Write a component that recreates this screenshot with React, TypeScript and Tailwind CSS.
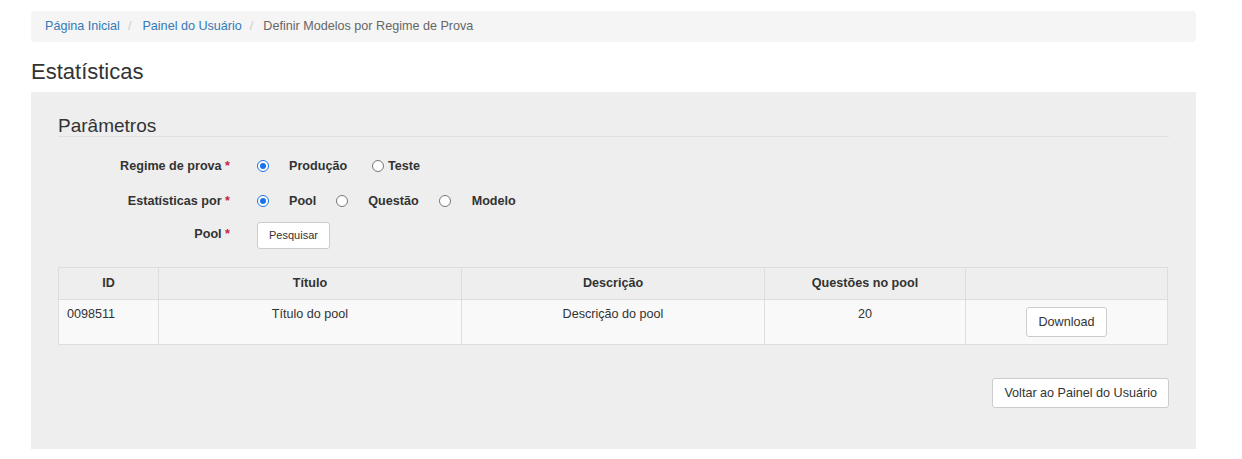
import React from "react";

const Radio = ({ checked }: { checked?: boolean }) =>
  checked ? (
    <span className="inline-block w-[12px] h-[12px] rounded-full border border-[#1a73e8] bg-white relative">
      <span className="absolute left-[2px] top-[2px] w-[6px] h-[6px] rounded-full bg-[#1a73e8]" />
    </span>
  ) : (
    <span className="inline-block w-[12px] h-[12px] rounded-full border border-[#767676] bg-white" />
  );

export default function App() {
  return (
    <div className="w-[1242px] h-[459px] bg-white overflow-hidden font-['Liberation_Sans',Arial,sans-serif] text-[#333] text-[12.6px]">
      <div className="ml-[31px] w-[1165px] pt-[11px]">
        <div className="h-[31px] bg-[#f5f5f5] rounded-[4px] flex items-center px-[14px] text-[12.6px]">
          <span className="text-[#337ab7]">Página Inicial</span>
          <span className="text-[#ccc] px-[8px]">/</span>
          <span className="text-[#337ab7] ml-[3px]">Painel do Usuário</span>
          <span className="text-[#ccc] px-[8px]">/</span>
          <span className="text-[#666] ml-[2px]">Definir Modelos por Regime de Prova</span>
        </div>
        <h1 className="text-[22px] leading-[26px] mt-[17px] mb-[7px] text-[#333]">Estatísticas</h1>
        <div className="bg-[#eee] h-[357px] px-[27px] pt-[24px]">
          <div className="text-[19px] leading-[20px] text-[#333] border-b border-[#e0e0e0]">Parâmetros</div>
          <div className="mt-[19px] flex flex-col">
            <div className="flex items-center h-[20px]">
              <div className="w-[172px] text-right font-bold">Regime de prova <span className="text-[#c7254e]">*</span></div>
              <div className="ml-[27px] flex items-center">
                <Radio checked />
                <span className="ml-[20px] font-bold">Produção</span>
                <span className="ml-[25px] flex items-center"><Radio /></span>
                <span className="ml-[4px] font-bold">Teste</span>
              </div>
            </div>
            <div className="flex items-center h-[20px] mt-[15px]">
              <div className="w-[172px] text-right font-bold">Estatísticas por <span className="text-[#c7254e]">*</span></div>
              <div className="ml-[27px] flex items-center">
                <Radio checked />
                <span className="ml-[20px] font-bold">Pool</span>
                <span className="ml-[20px] flex items-center"><Radio /></span>
                <span className="ml-[20px] font-bold">Questão</span>
                <span className="ml-[20px] flex items-center"><Radio /></span>
                <span className="ml-[21px] font-bold">Modelo</span>
              </div>
            </div>
            <div className="flex items-center mt-[11px]">
              <div className="w-[172px] text-right font-bold -mt-[3px]">Pool <span className="text-[#c7254e]">*</span></div>
              <button className="ml-[27px] h-[27px] px-[11px] bg-white border border-[#ccc] rounded-[3px] text-[11px] text-[#333]">Pesquisar</button>
            </div>
          </div>
          <table className="mt-[18px] w-[1110px] border-collapse border border-[#ddd]">
            <thead>
              <tr className="bg-[#eee] h-[32px]">
                <th className="w-[100px] border border-[#ddd] font-bold">ID</th>
                <th className="w-[303px] border border-[#ddd] font-bold">Título</th>
                <th className="w-[303px] border border-[#ddd] font-bold">Descrição</th>
                <th className="w-[201px] border border-[#ddd] font-bold">Questões no pool</th>
                <th className="border border-[#ddd]"></th>
              </tr>
            </thead>
            <tbody>
              <tr className="bg-[#f9f9f9] h-[45px]">
                <td className="border border-[#ddd] align-top pt-[5px] px-[8px]">0098511</td>
                <td className="border border-[#ddd] align-top pt-[5px] text-center">Título do pool</td>
                <td className="border border-[#ddd] align-top pt-[5px] text-center">Descrição do pool</td>
                <td className="border border-[#ddd] align-top pt-[5px] text-center">20</td>
                <td className="border border-[#ddd] text-center align-middle">
                  <button className="h-[30px] px-[11px] bg-white border border-[#ccc] rounded-[3px] text-[12.6px] text-[#333]">Download</button>
                </td>
              </tr>
            </tbody>
          </table>
          <div className="flex justify-end mt-[33px]">
            <button className="h-[30px] px-[11px] bg-white border border-[#ccc] rounded-[3px] text-[12.6px] text-[#333]">Voltar ao Painel do Usuário</button>
          </div>
        </div>
      </div>
    </div>
  );
}
